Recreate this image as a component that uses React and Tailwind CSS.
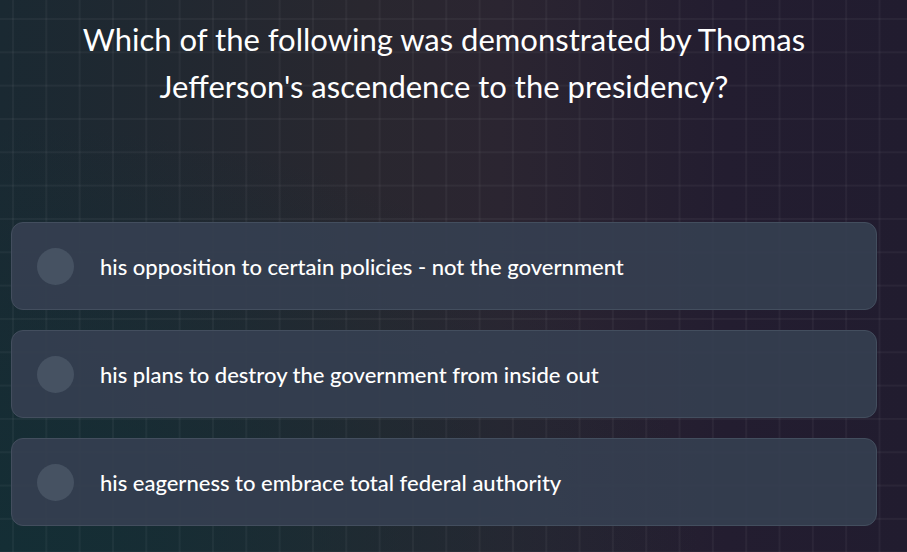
import React from "react";

const options = [
  "his opposition to certain policies - not the government",
  "his plans to destroy the government from inside out",
  "his eagerness to embrace total federal authority",
];

export default function App() {
  return (
    <div className="h-screen w-full overflow-hidden bg-[radial-gradient(ellipse_at_0%_100%,#142e35_0%,transparent_55%),linear-gradient(to_right,#1a2932_0%,#29272f_40%,#2b2531_55%,#231d30_80%,#211c2f_100%)] font-['Lato','Noto_Sans',sans-serif]">
      <div className="h-full w-full bg-[linear-gradient(to_right,rgba(255,255,255,0.04)_2px,transparent_2px),linear-gradient(to_bottom,rgba(255,255,255,0.04)_2px,transparent_2px)] bg-[size:33.333px_33.333px] bg-[position:12px_18px]">
        <div className="ml-[11px] mr-[30px] flex flex-col">
          <h1 className="mx-auto mt-[16px] max-w-[780px] text-center text-[31px] font-normal leading-[47px] text-white">
            Which of the following was demonstrated by Thomas Jefferson's ascendence to the presidency?
          </h1>
          <div className="mt-[112px] flex flex-col gap-[20px]">
            {options.map((o) => (
              <div
                key={o}
                className="flex h-[88px] items-center gap-[26px] rounded-xl border border-[#434e5e] bg-[rgba(53,63,80,0.92)] px-[25px]"
              >
                <div className="h-[37px] w-[37px] shrink-0 rounded-full bg-[#465262]" />
                <span className="text-[22px] font-medium text-white">{o}</span>
              </div>
            ))}
          </div>
        </div>
      </div>
    </div>
  );
}
